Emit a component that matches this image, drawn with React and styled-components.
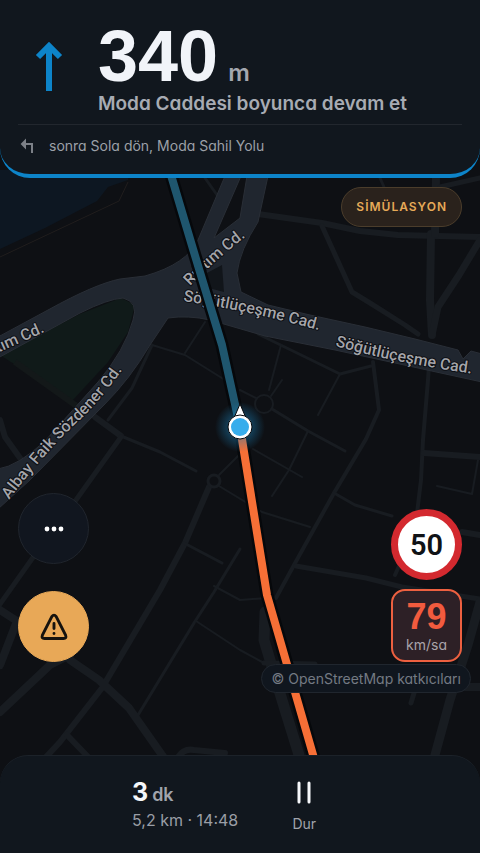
import React from 'react'
import styled, { createGlobalStyle } from 'styled-components'

const GlobalStyle = createGlobalStyle`
  * {
    box-sizing: border-box;
  }
  body {
    margin: 0;
    background: #0e1014;
    font-family: Inter, 'Liberation Sans', sans-serif;
    font-feature-settings: 'cv11';
  }
  button {
    font: inherit;
    font-feature-settings: inherit;
    cursor: pointer;
  }
`

const Screen = styled.div`
  position: relative;
  min-height: 100vh;
  display: flex;
  flex-direction: column;
  overflow: hidden;
`

const MapCanvas = styled.svg`
  position: absolute;
  inset: 0;
  width: 100%;
  height: 100%;
`

const StreetName = styled.text`
  font-family: Roboto, sans-serif;
  font-size: 16px;
  font-weight: 500;
  fill: #a4a5aa;
  stroke: #0c0e13;
  stroke-width: 2px;
  stroke-linejoin: round;
  paint-order: stroke;
`

const Header = styled.header`
  position: relative;
  padding: 20px 18px 18px;
  background: #11171e;
  border-bottom: 4px solid #0d84c9;
  border-radius: 0 0 30px 30px;
`

const Maneuver = styled.div`
  display: flex;
  align-items: center;
  gap: 18px;
  padding-bottom: 8px;
  border-bottom: 1px solid #22272e;
`

const ManeuverIcon = styled.svg`
  width: 62px;
  height: 64px;
  flex: none;
`

const Distance = styled.div`
  display: flex;
  align-items: baseline;
  gap: 10px;
  color: #f1f4f9;
`

const DistanceValue = styled.span`
  font-family: 'Liberation Sans', sans-serif;
  font-size: 72px;
  font-weight: 700;
  line-height: 72px;
`

const DistanceUnit = styled.span`
  font-size: 24px;
  font-weight: 600;
  line-height: 24px;
  color: #a3a7af;
`

const Instruction = styled.div`
  font-size: 19px;
  font-weight: 600;
  line-height: 24px;
  color: #a7abb3;
`

const NextStep = styled.div`
  display: flex;
  align-items: center;
  gap: 12px;
  padding-top: 11px;
  font-size: 14px;
  line-height: 20px;
  color: #9ca0a8;
`

const NextIcon = styled.svg`
  width: 19px;
  height: 18px;
`

const Overlay = styled.main`
  position: relative;
  flex: 1;
  display: flex;
  flex-direction: column;
  padding: 9px 18px 62px;
`

const Badge = styled.div`
  align-self: flex-end;
  padding: 0 14px;
  border: 1px solid #4b3d2b;
  border-radius: 20px;
  background: #2a221c;
  color: #e6aa58;
  font-size: 12px;
  font-weight: 600;
  line-height: 38px;
  letter-spacing: 1px;
`

const Controls = styled.div`
  display: flex;
  justify-content: space-between;
  align-items: flex-end;
  margin-top: auto;
`

const Stack = styled.div`
  display: flex;
  flex-direction: column;
  gap: ${(props) => props.$gap};
`

const RoundButton = styled.button`
  width: 71px;
  height: 71px;
  padding: 0;
  display: flex;
  align-items: center;
  justify-content: center;
  border-radius: 50%;
  border: 1px solid ${(props) => (props.$warning ? '#e8a857' : '#20252d')};
  background: ${(props) => (props.$warning ? '#e8a857' : '#11161f')};
`

const SpeedLimit = styled.div`
  width: 71px;
  height: 71px;
  display: flex;
  align-items: center;
  justify-content: center;
  border: 7px solid #d3292f;
  border-radius: 50%;
  background: #fff;
  color: #101216;
  font-family: Roboto, sans-serif;
  font-size: 29px;
  font-weight: 600;
`

const Speed = styled.div`
  width: 71px;
  height: 73px;
  padding-top: 8px;
  border: 2px solid #ed6040;
  border-radius: 14px;
  background: #2d2026;
  text-align: center;
`

const SpeedValue = styled.div`
  font-family: 'Liberation Sans', sans-serif;
  font-size: 36px;
  font-weight: 700;
  line-height: 36px;
  color: #f15b3e;
`

const SpeedUnit = styled.div`
  font-size: 14px;
  line-height: 20px;
  color: #aaa4aa;
`

const Attribution = styled.a`
  align-self: flex-end;
  margin: 2px -9px 0 0;
  padding: 0 9px;
  border: 1px solid #20262e;
  border-radius: 15px;
  background: #10161e;
  color: #747a83;
  font-size: 14px;
  line-height: 27px;
  text-decoration: none;
`

const Footer = styled.footer`
  position: relative;
  display: flex;
  gap: 40px;
  padding: 22px 18px 20px 27.5%;
  background: #11171e;
  border-top: 1px solid #1c2229;
  border-radius: 28px 28px 0 0;
`

const Eta = styled.div`
  color: #a0a4ac;
  font-size: 18px;
  font-weight: 600;
  line-height: 28px;
`

const Minutes = styled.strong`
  margin-right: 4px;
  color: #f5f7fa;
  font-size: 25px;
  font-weight: 700;
`

const TripInfo = styled.div`
  color: #9a9ea6;
  font-size: 16px;
  line-height: 22px;
`

const PauseButton = styled.button`
  width: 52px;
  padding: 3px 0 0;
  display: flex;
  flex-direction: column;
  align-items: center;
  gap: 10px;
  border: none;
  background: none;
  color: #a0a4ac;
  font-size: 14px;
  line-height: 18px;
`

const lanes = [
  { d: 'M258 214 L322 223 L360 231 L398 235 L480 237', w: 6 },
  { d: 'M322 226 L352 292 L370 303 L405 325 L418 334', w: 5 },
  { d: 'M431 234 L430 300 L432 335', w: 8 },
  { d: 'M480 240 L459 275 L438 307 L432 335', w: 7 },
  { d: 'M436 178 L435 234', w: 8 },
  { d: 'M440 187 L480 178', w: 5 },
  { d: 'M380 178 L384 187', w: 3 },
  { d: 'M205 178 L222 202', w: 3 },
  { d: 'M152 345 L132 388 L108 420', w: 3 },
  { d: 'M152 345 L185 355 L225 380', w: 2 },
  { d: 'M185 353 L205 322', w: 2 },
  { d: 'M95 417 L121 436', w: 6 },
  { d: 'M121 436 L160 452 L196 471', w: 3 },
  { d: 'M121 437 L76 500 L34 556 L0 604', w: 5 },
  { d: 'M0 420 L5 437 L20 458', w: 6 },
  { d: 'M209 487 L185 543 L160 590 L102 688 L60 742 L34 770', w: 6 },
  { d: 'M240 454 L219 475', w: 2 },
  { d: 'M219 486 L262 512 L310 527', w: 2 },
  { d: 'M184 543 L222 563', w: 3 },
  { d: 'M240 549 L214 592 L194 623 L135 720', w: 3 },
  { d: 'M196 621 L240 650 L264 663', w: 2 },
  { d: 'M214 586 L240 600 L266 598', w: 2 },
  { d: 'M0 610 L17 621 L0 665', w: 8 },
  { d: 'M0 712 L50 665 L70 655', w: 8 },
  { d: 'M70 660 L99 680 L129 708 L162 755 L185 790', w: 8 },
  { d: 'M67 735 L91 760', w: 6 },
  { d: 'M178 757 Q184 748 194 750 L225 753', w: 6 },
  { d: 'M258 334 L295 352 L340 374 L371 366', w: 3 },
  { d: 'M340 374 L318 415', w: 2 },
  { d: 'M373 362 L379 410 L366 439 L334 493 L294 565 L276 598', w: 4 },
  { d: 'M334 493 L355 505 L392 516', w: 3 },
  { d: 'M430 350 L428 380 L423 440 L421 480 L415 530 L395 575', w: 4 },
  { d: 'M424 453 L480 457', w: 6 },
  { d: 'M478 460 L472 494 L437 486', w: 2 },
  { d: 'M281 345 L269 390', w: 2 },
  { d: 'M240 390 L256 398', w: 2 },
  { d: 'M271 396 L282 380', w: 2 },
  { d: 'M272 409 L308 431 L345 451', w: 3 },
  { d: 'M308 431 L289 470 L272 496', w: 2 },
  { d: 'M253 449 L302 477', w: 2 },
  { d: 'M296 566 L366 578 L402 587 L480 599', w: 5 },
  { d: 'M462 532 L480 535', w: 6 },
  { d: 'M265 612 L264 640 L282 700 L299 755', w: 11 },
  { d: 'M480 602 L468 645 L450 700 L435 755', w: 9 },
  { d: 'M418 680 L411 703', w: 5 },
  { d: 'M264 663 L315 664', w: 5 },
  { d: 'M460 687 L480 687', w: 8 },
]

function StreetMap() {
  return (
    <MapCanvas viewBox="0 0 480 853" preserveAspectRatio="xMidYMid slice" aria-label="Harita">
      <defs>
        <radialGradient id="glow">
          <stop offset="0.3" stopColor="#1b7fb5" stopOpacity="0.55" />
          <stop offset="1" stopColor="#1b7fb5" stopOpacity="0" />
        </radialGradient>
        <path id="rihtimWest" d="M-23 362 L60 325" />
        <path id="rihtimEast" d="M190 286 Q216 259 252 232" />
        <path id="albay" d="M9 500 Q49 447 83 417 Q107 393 132 356" />
        <path id="sogutluWest" d="M183 301 Q250 311 322 331" />
        <path id="sogutluEast" d="M335 346 Q400 364 475 374" />
      </defs>
      <rect width="480" height="853" fill="#0e1014" />
      <path d="M0 170 L130 170 L128 180 L108 187 L97 201 L45 228 L0 249Z" fill="#0d1722" />
      <path d="M0 257 L119 201 L128 182" fill="none" stroke="#201d1d" strokeWidth="1" />
      <path d="M0 355 L80 314 L121 298 L135 305 L128 332 L108 362 L71 402 L36 378 L0 355Z" fill="#101a19" />
      <path d="M15 362 L85 412" stroke="#131819" strokeWidth="6" />
      <g fill="none" stroke="#181c21" strokeLinejoin="round" strokeLinecap="round">
        {lanes.map((lane) => (
          <path key={lane.d} d={lane.d} strokeWidth={lane.w} />
        ))}
        <circle cx="264" cy="404" r="9" strokeWidth="2" />
        <circle cx="214" cy="481" r="6" strokeWidth="3" />
      </g>
      <g fill="#20262f" stroke="#292e36" strokeWidth="1">
        <path d="M-2 337 L48 310 Q95 284 120 279 L145 276 Q187 264 198 240 L225 176 L241 176 L214 238 L240 218 L247 176 L268 176 L258 222 Q240 250 237 273 L241 292 L268 305 L310 315 L365 327 L415 339 L458 350 L463 359 L471 351 L482 354 L482 382 L395 363 L335 350 L265 336 L210 320 Q188 315 168 318 L150 345 Q130 379 104 405 L30 480 L-2 509 L-2 469 Q18 466 45 441 L98 382 Q125 350 133 320 Q139 302 123 298 Q108 299 80 313 L-2 358Z" />
      </g>
      <path d="M205 274 L222 265 L224 292 L205 287Z" fill="#11151a" />
      <StreetName><textPath href="#rihtimWest">Rıhtım Cd.</textPath></StreetName>
      <StreetName><textPath href="#rihtimEast">Rıhtım Cd.</textPath></StreetName>
      <StreetName><textPath href="#albay">Albay Faik Sözdener Cd.</textPath></StreetName>
      <StreetName><textPath href="#sogutluWest">Söğütlüçeşme Cad.</textPath></StreetName>
      <StreetName><textPath href="#sogutluEast">Söğütlüçeşme Cad.</textPath></StreetName>
      <g fill="none" strokeLinejoin="round">
        <path d="M168 165 L193 249 L222 345 L240 427 L267 595 L316 765" stroke="#06080b" strokeWidth="13" />
        <path d="M240 427 L267 595 L316 765" stroke="#f66f36" strokeWidth="8" />
        <path d="M168 165 L193 249 L222 345 L240 427" stroke="#1f566e" strokeWidth="8" />
      </g>
      <circle cx="240" cy="427" r="25" fill="url(#glow)" />
      <path d="M240 404 L246 418 L234 418Z" fill="#fff" stroke="#06080b" strokeWidth="1" />
      <circle cx="240" cy="427" r="12" fill="#fff" stroke="#06080b" strokeWidth="1" />
      <circle cx="240" cy="427" r="9" fill="#37adec" />
    </MapCanvas>
  )
}

function App() {
  return (
    <>
      <GlobalStyle />
      <Screen>
        <StreetMap />
        <Header>
          <Maneuver>
            <ManeuverIcon viewBox="0 0 62 64" fill="none" stroke="#0d84c9" strokeWidth="6">
              <path d="M31 55 V10 M20 21 L31 10 L42 21" />
            </ManeuverIcon>
            <div>
              <Distance>
                <DistanceValue>340</DistanceValue>
                <DistanceUnit>m</DistanceUnit>
              </Distance>
              <Instruction>Moda Caddesi boyunca devam et</Instruction>
            </div>
          </Maneuver>
          <NextStep>
            <NextIcon viewBox="0 0 19 18" fill="none" stroke="#7c8087" strokeWidth="2">
              <path d="M14 16 V7 H6" />
              <path d="M7 4 L4 7 L7 10Z" fill="#7c8087" />
            </NextIcon>
            <span>sonra Sola dön, Moda Sahil Yolu</span>
          </NextStep>
        </Header>

        <Overlay>
          <Badge>SİMÜLASYON</Badge>
          <Controls>
            <Stack $gap="27px">
              <RoundButton aria-label="Diğer seçenekler">
                <svg width="20" height="6" viewBox="0 0 20 6" fill="#fff">
                  <circle cx="3" cy="3" r="2.4" />
                  <circle cx="10" cy="3" r="2.4" />
                  <circle cx="17" cy="3" r="2.4" />
                </svg>
              </RoundButton>
              <RoundButton $warning aria-label="Tehlike bildir">
                <svg width="28" height="28" viewBox="0 0 28 28" fill="none" stroke="#15120e" strokeWidth="2.9" strokeLinecap="round" strokeLinejoin="round">
                  <path d="M11.8 3.6 L2.4 22.2 Q1.2 25.5 4.5 25.5 H23.5 Q26.8 25.5 25.6 22.2 L16.2 3.6 Q14 0.6 11.8 3.6Z" />
                  <path d="M14 10.5 V15.5 M14 20.5 V20.6" />
                </svg>
              </RoundButton>
            </Stack>
            <Stack $gap="9px">
              <SpeedLimit>50</SpeedLimit>
              <Speed>
                <SpeedValue>79</SpeedValue>
                <SpeedUnit>km/sa</SpeedUnit>
              </Speed>
            </Stack>
          </Controls>
          <Attribution href="#">© OpenStreetMap katkıcıları</Attribution>
        </Overlay>

        <Footer>
          <div>
            <Eta>
              <Minutes>3</Minutes>
              dk
            </Eta>
            <TripInfo>5,2 km · 14:48</TripInfo>
          </div>
          <PauseButton>
            <svg width="16" height="24" viewBox="0 0 16 24" stroke="#f5f7fa" strokeWidth="3" strokeLinecap="round">
              <path d="M3 2 V21 M13 2 V21" />
            </svg>
            Dur
          </PauseButton>
        </Footer>
      </Screen>
    </>
  )
}

export default App
